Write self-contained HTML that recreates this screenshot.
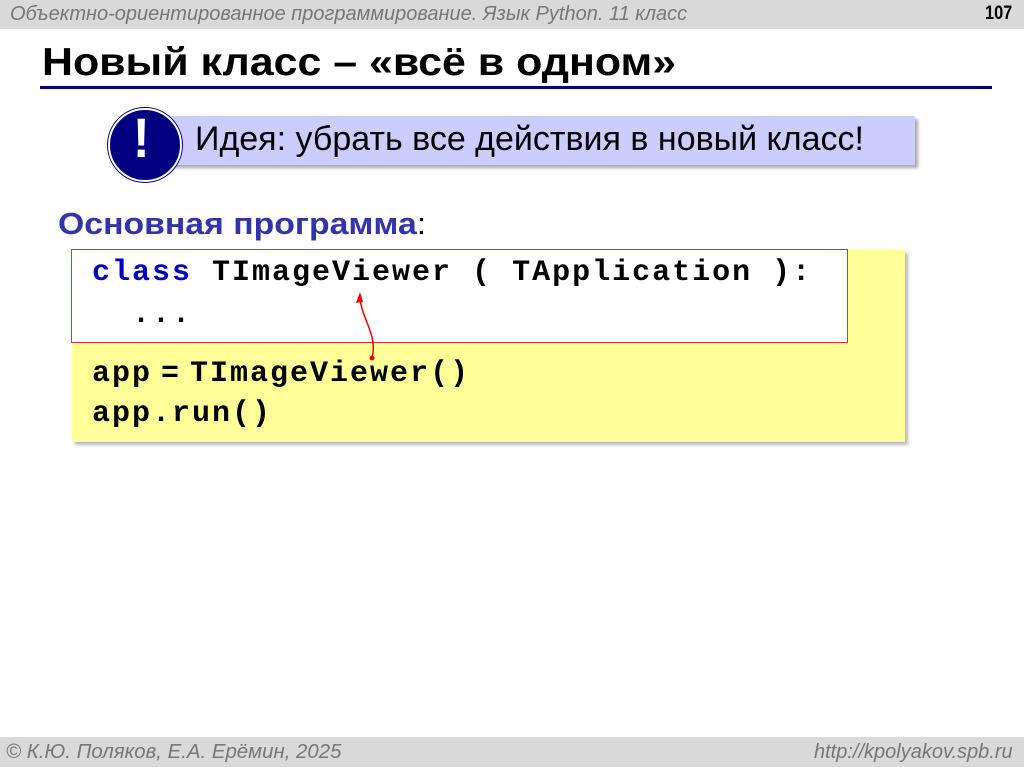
<!DOCTYPE html>
<html><head><meta charset="utf-8"><style>
body{margin:0;width:1024px;height:767px;background:#fff;position:relative;overflow:hidden;font-family:"Liberation Sans",sans-serif}
.abs{position:absolute;white-space:nowrap}
.n{transform-origin:0 0}
.mono{font-family:"Liberation Mono",monospace;font-weight:bold;font-size:30px;letter-spacing:2px;color:#000;white-space:pre}
</style></head><body>
<div class="abs" style="left:0;top:0;width:1024px;height:29px;background:#d9d9d9"></div>
<div class="abs n" style="left:10px;top:3px;font-size:20px;font-style:italic;color:#777">Объектно-ориентированное программирование. Язык Python. 11 класс</div>
<div class="abs n" style="left:985px;top:3px;font-size:19px;font-weight:bold;color:#000;transform:scaleX(0.86)">107</div>
<div class="abs n" style="left:42px;top:41px;font-size:39px;font-weight:bold;color:#000;transform:scaleX(1.10)">Новый класс – «всё в одном»</div>
<div class="abs" style="left:40px;top:86px;width:952px;height:3px;background:#000080"></div>

<div class="abs" style="left:170px;top:116px;width:745px;height:49px;background:#ccccff;box-shadow:3px 3px 3px #aaa"></div>
<div class="abs" style="left:108px;top:108px;width:70px;height:70px;border-radius:50%;background:#000080;border:2px solid #fff;box-shadow:0 0 0 1px #000080"></div>
<div class="abs" style="left:132px;top:105px;font-size:56px;font-weight:bold;color:#fff;transform:scaleX(0.9)">!</div>
<div class="abs n" style="left:195px;top:120px;font-size:34px;color:#000;transform:scaleX(1.0)">Идея: убрать все действия в новый класс!</div>

<div class="abs n" style="left:58px;top:206px;font-size:31px;font-weight:bold;color:#3333aa;transform:scaleX(1.09)">Основная программа<span style="font-weight:normal;color:#000">:</span></div>

<div class="abs" style="left:72px;top:250px;width:833px;height:192px;background:#ffff99;box-shadow:3px 3px 3px #bbb"></div>
<div class="abs" style="left:71px;top:249px;width:775px;height:92px;background:#fff;border:1px solid #e03030"></div>
<div class="abs mono" style="left:92px;top:256px"><span style="color:#0000c0">class</span> TImageViewer ( TApplication ):</div>
<div class="abs mono" style="left:92px;top:298px">  ...</div>
<div class="abs mono" style="left:92px;top:357px">app<span style="margin:0 9px">=</span>TImageViewer()</div>
<div class="abs mono" style="left:92px;top:397px">app.run()</div>
<svg class="abs" style="left:340px;top:290px" width="60" height="75"><path d="M32 68 C38 45 22 30 20 8" stroke="#e00" stroke-width="1.5" fill="none"/><path d="M20 2 L16 13 L23 12 Z" fill="#e00"/><circle cx="32" cy="68" r="2.5" fill="#e00"/></svg>

<div class="abs" style="left:0;top:737px;width:1024px;height:30px;background:#d9d9d9"></div>
<div class="abs n" style="left:6px;top:741px;font-size:20px;font-style:italic;color:#777;transform:scaleX(1.02)">© К.Ю. Поляков, Е.А. Ерёмин, 2025</div>
<div class="abs n" style="left:814px;top:741px;font-size:20px;font-style:italic;color:#777;transform:scaleX(1.0)">http://kpolyakov.spb.ru</div>
</body></html>
